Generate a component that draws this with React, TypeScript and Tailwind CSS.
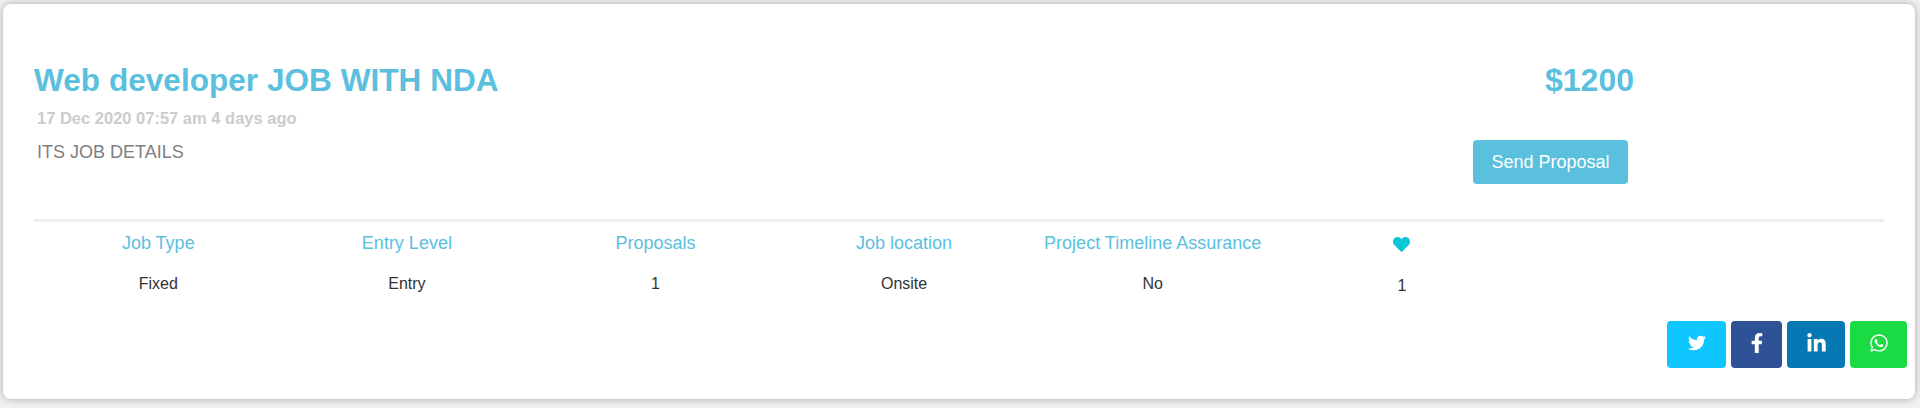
import { FaFacebookF, FaHeart, FaLinkedinIn, FaTwitter, FaWhatsapp } from "react-icons/fa";

const stats = [
  { label: "Job Type", value: "Fixed" },
  { label: "Entry Level", value: "Entry" },
  { label: "Proposals", value: "1" },
  { label: "Job location", value: "Onsite" },
  { label: "Project Timeline Assurance", value: "No" },
];

const App = () => {
  return (
    <div className="h-[408px] bg-[#f1f1f1] pt-1 pr-[5px] pb-[9px] pl-[3px] font-['Liberation_Sans',Arial,sans-serif]">
      <div className="h-full rounded-lg bg-white pl-[31px] pr-2 pt-[56px] shadow-[0_0_8px_rgba(0,0,0,0.3)]">
        <div className="flex h-[159px] items-start">
          <div className="w-[1431px]">
            <h1 className="text-[31.6px] leading-[40px] font-bold text-[#5bc0de]">Web developer JOB WITH NDA</h1>
            <p className="mt-[8px] pl-[3px] text-[16.5px] leading-5 font-bold text-[#ccc]">17 Dec 2020 07:57 am 4 days ago</p>
            <p className="mt-[13px] pl-[3px] text-lg leading-[22px] text-[#808080]">ITS JOB DETAILS</p>
          </div>
          <div className="flex w-[170px] flex-col items-end">
            <div className="pr-[1px] text-[32px] leading-[40px] font-bold text-[#5bc0de]">$1200</div>
            <button className="mt-[40px] mr-[7px] h-[44px] w-[155px] rounded bg-[#5bc0de] text-lg text-white">Send Proposal</button>
          </div>
        </div>
        <div className="mr-[23px] h-[3px] bg-[#eee]"></div>
        <div className="flex pt-[10px]">
          {stats.map((stat) => (
            <div key={stat.label} className="w-[248.6px] text-center">
              <div className="text-lg leading-[22px] text-[#5bc0de]">{stat.label}</div>
              <div className="mt-[20px] text-base leading-5 text-[#333]">{stat.value}</div>
            </div>
          ))}
          <div className="flex w-[250px] flex-col items-center">
            <FaHeart className="mt-[4px] text-[17px] text-[#0bc6d6]" />
            <div className="mt-[23px] text-base leading-5 text-[#333]">1</div>
          </div>
        </div>
        <div className="mt-[25px] flex justify-end gap-[5px]">
          <a className="flex h-[47px] w-[59px] items-center justify-center rounded bg-[#0fc6ff] pb-[3px] text-white"><FaTwitter className="text-[18px]" /></a>
          <a className="flex h-[47px] w-[51px] items-center justify-center rounded bg-[#2f5196] pb-[3px] text-white"><FaFacebookF className="text-[20px]" /></a>
          <a className="flex h-[47px] w-[58px] items-center justify-center rounded bg-[#0679b5] pb-[3px] text-white"><FaLinkedinIn className="text-[21px]" /></a>
          <a className="flex h-[47px] w-[57px] items-center justify-center rounded bg-[#1bdb45] pb-[3px] text-white"><FaWhatsapp className="text-[20px]" /></a>
        </div>
      </div>
    </div>
  );
};

export default App;
